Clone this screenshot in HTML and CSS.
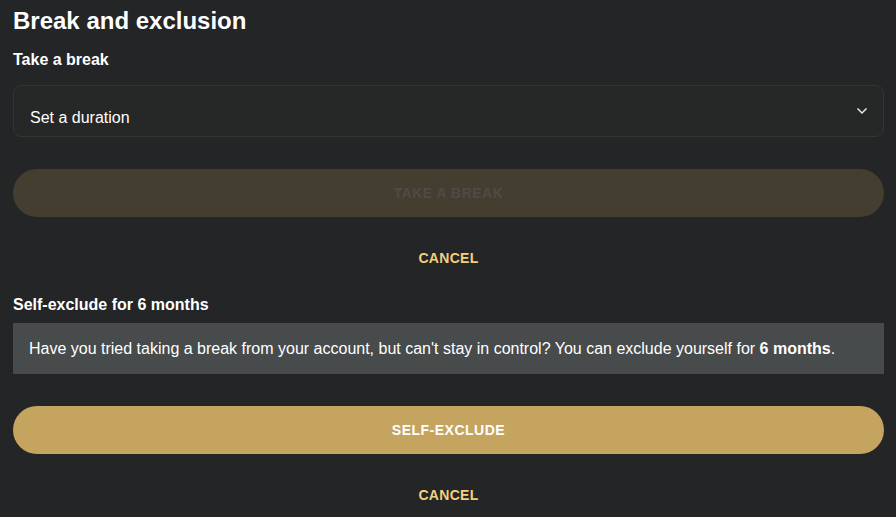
FILE: index.html
```html
<!DOCTYPE html>
<html>
<head>
<meta charset="utf-8">
<link rel="stylesheet" href="styles.css">
</head>
<body>
<main class="panel">
  <h1 class="title">Break and exclusion</h1>
  <h2 class="subtitle">Take a break</h2>
  <div class="select">
    <span class="select-value">Set a duration</span>
    <svg class="chevron" width="12" height="8" viewBox="0 0 12 8"><path d="M1.5 1.5 L6 6 L10.5 1.5" fill="none" stroke="#e8e8e8" stroke-width="1.5"/></svg>
  </div>
  <button class="btn btn-disabled">Take a break</button>
  <button class="link">Cancel</button>
  <h2 class="subtitle sub2">Self-exclude for 6 months</h2>
  <div class="info">Have you tried taking a break from your account, but can't stay in control? You can exclude yourself for <b>6 months</b>.</div>
  <button class="btn btn-gold">Self-exclude</button>
  <button class="link">Cancel</button>
</main>
</body>
</html>
```

FILE: styles.css
```css
html, body {
  margin: 0;
  background: #232527;
  font-family: "Liberation Sans", Arial, sans-serif;
  color: #ffffff;
}
.panel {
  padding: 6px 12px 0 13px;
  display: flex;
  flex-direction: column;
}
.title {
  margin: 0;
  font-size: 24px;
  line-height: 30px;
  font-weight: bold;
}
.subtitle {
  margin: 15px 0 0;
  font-size: 16px;
  line-height: 18px;
  font-weight: bold;
}
.sub2 {
  margin-top: 30px;
}
.select {
  margin-top: 16px;
  height: 52px;
  box-sizing: border-box;
  border: 1px solid #333534;
  border-radius: 8px;
  background: #262827;
  display: flex;
  align-items: flex-end;
  padding: 0 15px 8px 16px;
  position: relative;
}
.select-value {
  font-size: 16px;
  line-height: 20px;
}
.chevron {
  position: absolute;
  right: 15px;
  top: 21px;
}
.btn {
  margin-top: 32px;
  height: 48px;
  border: none;
  border-radius: 24px;
  font-family: inherit;
  font-size: 14px;
  font-weight: bold;
  text-transform: uppercase;
  letter-spacing: 0.5px;
}
.btn-disabled {
  background: #443e31;
  color: #4d4b48;
}
.btn-gold {
  background: #c4a45f;
  color: #ffffff;
}
.link {
  margin-top: 33px;
  background: none;
  border: none;
  color: #f4cf7d;
  font-family: inherit;
  font-size: 14px;
  font-weight: bold;
  text-transform: uppercase;
  letter-spacing: 0.3px;
  line-height: 16px;
  padding: 0;
  align-self: center;
}
.info {
  margin-top: 9px;
  background: #474b4c;
  padding: 16px 16px 15px;
  font-size: 16px;
  line-height: 20px;
}
.info b {
  font-weight: bold;
}
```
